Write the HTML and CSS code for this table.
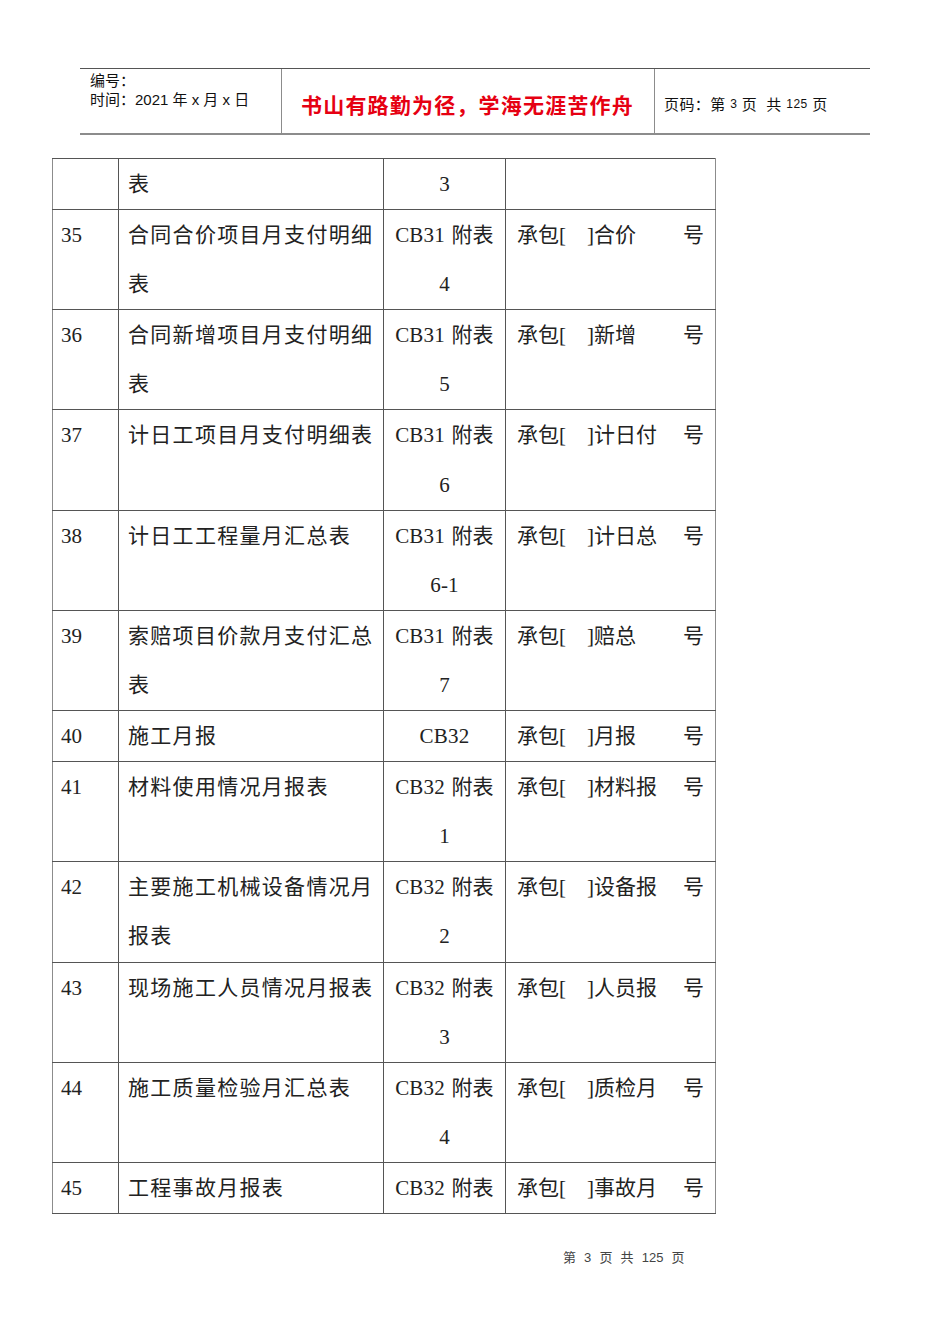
FILE: index.html
```html
<!DOCTYPE html>
<html lang="zh">
<head>
<meta charset="utf-8">
<title>第 3 页</title>
<link rel="stylesheet" href="styles.css">
</head>
<body>
<div class="page">
  <div class="header">
    <div class="hcell hleft">
      <div>编号：</div>
      <div>时间：2021 年 x 月 x 日</div>
    </div>
    <div class="hcell hmid">书山有路勤为径，学海无涯苦作舟</div>
    <div class="hcell hright">页码：第 <span class="sm">3</span> 页&nbsp; 共 <span class="sm">125</span> 页</div>
  </div>

  <table class="list">
    <colgroup>
      <col class="c1"><col class="c2"><col class="c3"><col class="c4">
    </colgroup>
    <tr><td class="num"></td><td class="name">表</td><td class="code">3</td><td class="fmt"></td></tr>
    <tr><td class="num">35</td><td class="name">合同合价项目月支付明细<br>表</td><td class="code">CB31 附表<br>4</td><td class="fmt"><div class="fm"><span>承包[&nbsp;&nbsp;&nbsp;&nbsp;]合价</span><span>号</span></div></td></tr>
    <tr><td class="num">36</td><td class="name">合同新增项目月支付明细<br>表</td><td class="code">CB31 附表<br>5</td><td class="fmt"><div class="fm"><span>承包[&nbsp;&nbsp;&nbsp;&nbsp;]新增</span><span>号</span></div></td></tr>
    <tr><td class="num">37</td><td class="name">计日工项目月支付明细表</td><td class="code">CB31 附表<br>6</td><td class="fmt"><div class="fm"><span>承包[&nbsp;&nbsp;&nbsp;&nbsp;]计日付</span><span>号</span></div></td></tr>
    <tr><td class="num">38</td><td class="name">计日工工程量月汇总表</td><td class="code">CB31 附表<br>6-1</td><td class="fmt"><div class="fm"><span>承包[&nbsp;&nbsp;&nbsp;&nbsp;]计日总</span><span>号</span></div></td></tr>
    <tr><td class="num">39</td><td class="name">索赔项目价款月支付汇总<br>表</td><td class="code">CB31 附表<br>7</td><td class="fmt"><div class="fm"><span>承包[&nbsp;&nbsp;&nbsp;&nbsp;]赔总</span><span>号</span></div></td></tr>
    <tr><td class="num">40</td><td class="name">施工月报</td><td class="code">CB32</td><td class="fmt"><div class="fm"><span>承包[&nbsp;&nbsp;&nbsp;&nbsp;]月报</span><span>号</span></div></td></tr>
    <tr><td class="num">41</td><td class="name">材料使用情况月报表</td><td class="code">CB32 附表<br>1</td><td class="fmt"><div class="fm"><span>承包[&nbsp;&nbsp;&nbsp;&nbsp;]材料报</span><span>号</span></div></td></tr>
    <tr><td class="num">42</td><td class="name">主要施工机械设备情况月<br>报表</td><td class="code">CB32 附表<br>2</td><td class="fmt"><div class="fm"><span>承包[&nbsp;&nbsp;&nbsp;&nbsp;]设备报</span><span>号</span></div></td></tr>
    <tr><td class="num">43</td><td class="name">现场施工人员情况月报表</td><td class="code">CB32 附表<br>3</td><td class="fmt"><div class="fm"><span>承包[&nbsp;&nbsp;&nbsp;&nbsp;]人员报</span><span>号</span></div></td></tr>
    <tr><td class="num">44</td><td class="name">施工质量检验月汇总表</td><td class="code">CB32 附表<br>4</td><td class="fmt"><div class="fm"><span>承包[&nbsp;&nbsp;&nbsp;&nbsp;]质检月</span><span>号</span></div></td></tr>
    <tr><td class="num">45</td><td class="name">工程事故月报表</td><td class="code">CB32 附表</td><td class="fmt"><div class="fm"><span>承包[&nbsp;&nbsp;&nbsp;&nbsp;]事故月</span><span>号</span></div></td></tr>
  </table>

  <div class="footer">第 3 页 共 125 页</div>
</div>
</body>
</html>
```

FILE: styles.css
```css
html, body {
  margin: 0;
  padding: 0;
  background: #ffffff;
}

.page {
  width: 950px;
  height: 1344px;
  box-sizing: border-box;
  padding-top: 68px;
  position: relative;
  overflow: hidden;
  color: #222222;
}

.header {
  display: flex;
  margin: 0 0 0 80px;
  width: 790px;
  height: 64px;
  border-top: 1px solid #555555;
  border-bottom: 2px solid #8c8c8c;
  font-family: "Liberation Sans", "Noto Sans CJK SC", sans-serif;
}

.hcell {
  box-sizing: border-box;
}

.hleft {
  width: 201px;
  padding: 2px 0 0 10px;
  font-size: 15px;
  line-height: 19px;
  color: #111111;
}

.hmid {
  width: 374px;
  border-left: 1px solid #8c8c8c;
  border-right: 1px solid #8c8c8c;
  display: flex;
  align-items: center;
  padding: 6px 0 0 19px;
  color: #e60012;
  font-family: "Noto Sans CJK SC", sans-serif;
  font-weight: bold;
  font-size: 21px;
  letter-spacing: 1.2px;
}

.hright {
  flex: 1;
  display: flex;
  align-items: center;
  padding: 5px 0 0 9px;
  font-size: 15px;
  letter-spacing: 0.4px;
  color: #111111;
  white-space: pre;
}

.hright .sm {
  font-size: 12px;
}

.list {
  margin: 23px 0 0 52px;
  border-collapse: collapse;
  font-family: "Liberation Serif", "Noto Sans CJK SC", serif;
  font-size: 21px;
  color: #222222;
}

.c1 { width: 66px; }
.c2 { width: 265px; }
.c3 { width: 122px; }
.c4 { width: 210px; }

.list td {
  border: 1px solid #555555;
  padding: 1px 0 0 0;
  line-height: 49.1px;
  vertical-align: top;
  box-sizing: border-box;
}

.list tr td:first-child {
  border-left-color: #8c8c8c;
}

.list tr td:last-child {
  border-right-color: #8c8c8c;
}

.num {
  padding-left: 8px !important;
}

.name {
  padding-left: 9px !important;
  letter-spacing: 1.3px;
  white-space: nowrap;
}

.code {
  text-align: center;
  white-space: nowrap;
  word-spacing: 1px;
  letter-spacing: 0.2px;
}

.fmt {
  padding-left: 11px !important;
  padding-right: 11px !important;
}

.fm {
  display: flex;
  justify-content: space-between;
  white-space: nowrap;
}

.footer {
  position: absolute;
  left: 563px;
  top: 1247px;
  font-family: "Liberation Sans", "Noto Sans CJK SC", sans-serif;
  font-size: 13px;
  color: #444444;
  word-spacing: 4.5px;
}
```
